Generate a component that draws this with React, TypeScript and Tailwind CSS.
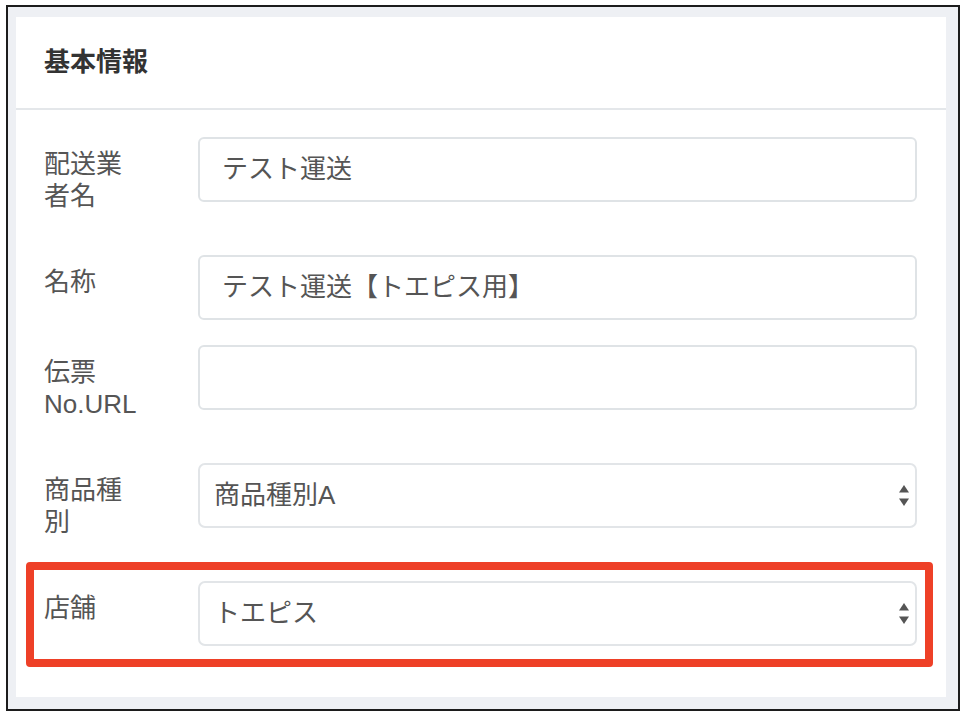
import React from "react";

const font = { fontFamily: '"Liberation Sans", "Noto Sans CJK JP", sans-serif' };

function Arrows() {
  return (
    <svg width="10" height="22" viewBox="0 0 10 22" className="absolute right-[6px] top-1/2 -translate-y-1/2">
      <polygon points="5,0 10,7.5 0,7.5" fill="#555" />
      <polygon points="0,13.5 10,13.5 5,21" fill="#555" />
    </svg>
  );
}

function Row({
  label,
  children,
  last,
  overlay,
}: {
  label: React.ReactNode;
  children: React.ReactNode;
  last?: boolean;
  overlay?: boolean;
}) {
  return (
    <div className={`relative flex items-start ${last ? "" : "mb-[25px]"}`}>
      {overlay && (
        <div className="pointer-events-none absolute -left-[18px] -top-[19px] -right-[16px] -bottom-[21px] rounded-[4px] border-[8px] border-[#ee4027]" />
      )}
      <div className="w-[154px] flex-none pt-[11px] pb-[18px] text-[26px] leading-[32px] text-[#555]">{label}</div>
      <div className="flex-1">{children}</div>
    </div>
  );
}

function TextInput({ value }: { value: string }) {
  return (
    <div className="flex h-[65px] items-center rounded-[6px] border-2 border-[#dfe3e6] bg-white pl-[22px] text-[26px] text-[#555]">
      {value}
    </div>
  );
}

function Select({ value }: { value: string }) {
  return (
    <div className="relative flex h-[65px] items-center rounded-[7px] border-2 border-[#e2e5e8] bg-white pl-[14px] text-[26px] text-[#555]">
      {value}
      <Arrows />
    </div>
  );
}

export default function App() {
  return (
    <div className="h-[722px] w-[968px] bg-white pl-[6px] pt-[5px]" style={font}>
      <div className="h-[706px] w-[954px] border-2 border-[#1c1c1c] bg-[#eef0f4] pb-[11px] pl-[8px] pr-[12px] pt-[10px]">
        <div className="h-[680px] bg-white">
          <div className="flex h-[93px] items-center border-b-2 border-[#e4e7ea] pl-[28px]">
            <span className="text-[26px] font-bold text-[#333]">基本情報</span>
          </div>
          <div className="pl-[28px] pr-[29px] pt-[27px]">
            <Row
              label={
                <>
                  配送業
                  <br />
                  者名
                </>
              }
            >
              <TextInput value="テスト運送" />
            </Row>
            <Row label="名称">
              <TextInput value="テスト運送【トエピス用】" />
            </Row>
            <Row
              label={
                <>
                  伝票
                  <br />
                  No.URL
                </>
              }
            >
              <TextInput value="" />
            </Row>
            <Row
              label={
                <>
                  商品種
                  <br />
                  別
                </>
              }
            >
              <Select value="商品種別A" />
            </Row>
            <Row label="店舗" last overlay>
              <Select value="トエピス" />
            </Row>
          </div>
        </div>
      </div>
    </div>
  );
}
